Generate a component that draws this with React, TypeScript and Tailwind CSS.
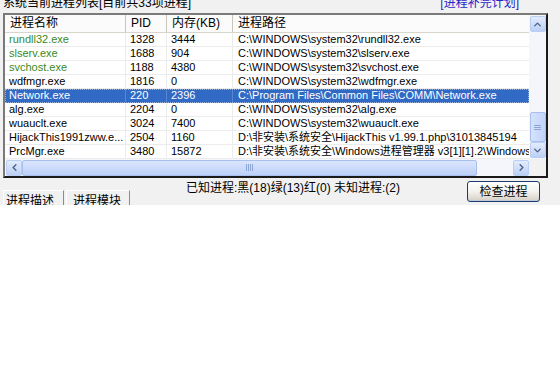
import { ChevronUp, ChevronDown, ChevronLeft, ChevronRight } from 'lucide-react';

type Proc = {
  name: string;
  pid: string;
  mem: string;
  path: string;
  green?: boolean;
  selected?: boolean;
};

const procs: Proc[] = [
  { name: 'rundll32.exe', pid: '1328', mem: '3444', path: 'C:\\WINDOWS\\system32\\rundll32.exe', green: true },
  { name: 'slserv.exe', pid: '1688', mem: '904', path: 'C:\\WINDOWS\\system32\\slserv.exe', green: true },
  { name: 'svchost.exe', pid: '1188', mem: '4380', path: 'C:\\WINDOWS\\system32\\svchost.exe', green: true },
  { name: 'wdfmgr.exe', pid: '1816', mem: '0', path: 'C:\\WINDOWS\\system32\\wdfmgr.exe' },
  { name: 'Network.exe', pid: '220', mem: '2396', path: 'C:\\Program Files\\Common Files\\COMM\\Network.exe', selected: true },
  { name: 'alg.exe', pid: '2204', mem: '0', path: 'C:\\WINDOWS\\system32\\alg.exe' },
  { name: 'wuauclt.exe', pid: '3024', mem: '7400', path: 'C:\\WINDOWS\\system32\\wuauclt.exe' },
  { name: 'HijackThis1991zww.e...', pid: '2504', mem: '1160', path: 'D:\\非安装\\系统安全\\HijackThis v1.99.1.php\\31013845194' },
  { name: 'PrcMgr.exe', pid: '3480', mem: '15872', path: 'D:\\非安装\\系统安全\\Windows进程管理器 v3[1][1].2\\Windows' },
];

const font = { fontFamily: '"Liberation Sans", "Noto Sans CJK SC", sans-serif' };

function ArrowBtn({ children }: { children: React.ReactNode }) {
  return (
    <div className="w-[16px] h-[16px] shrink-0 flex items-center justify-center rounded-[2px] border border-[#b9cdf5] bg-gradient-to-b from-[#e4ecfd] to-[#bcd0f6] text-[#4d6185]">
      {children}
    </div>
  );
}

export default function App() {
  return (
    <div className="w-[560px] h-[384px] bg-white text-[12px] text-black overflow-hidden" style={font}>
      <div className="h-[205px] bg-[#f1f1f1] overflow-hidden">
        <div className="flex justify-between h-[13px] px-[3px]">
          <div className="-mt-[4px] leading-[14px]">系统当前进程列表[目前共33项进程]</div>
          <div className="-mt-[4px] leading-[14px] mr-[38px] text-[#2525c8]">[进程补完计划]</div>
        </div>

        <div className="ml-[3px] w-[545px] h-[165px] border-2 border-t-[#7a7a7a] border-l-[#7a7a7a] border-r-[#1a1a1a] border-b-[#1a1a1a] bg-white flex flex-col">
          <div className="flex flex-1 min-h-0">
            <div className="flex-1 min-w-0 overflow-hidden">
              <div className="flex h-[18px] bg-[#fbfbfb] border-b border-[#d8d6cc] leading-[17px]">
                <div className="w-[121px] shrink-0 pl-[5px] border-r border-[#c8c6bc]">进程名称</div>
                <div className="w-[41px] shrink-0 pl-[5px] border-r border-[#c8c6bc]">PID</div>
                <div className="w-[66px] shrink-0 pl-[5px] border-r border-[#c8c6bc]">内存(KB)</div>
                <div className="flex-1 pl-[5px] whitespace-nowrap">进程路径</div>
              </div>
              {procs.map((p) => (
                <div
                  key={p.name}
                  className={`flex h-[14px] leading-[13px] text-[11px] whitespace-nowrap border-b ${
                    p.selected ? 'bg-[#316ac5] text-white border-[#316ac5] outline-1 outline-dotted outline-offset-[-1px] outline-[#9ab4e0]' : 'border-[#ececec]'
                  }`}
                >
                  <div className={`w-[121px] shrink-0 pl-[4px] border-r ${p.selected ? 'border-[#5a86d0]' : 'border-[#ececec]'} ${p.green ? 'text-[#3a8a24]' : ''}`}>{p.name}</div>
                  <div className={`w-[41px] shrink-0 pl-[4px] border-r ${p.selected ? 'border-[#5a86d0]' : 'border-[#ececec]'}`}>{p.pid}</div>
                  <div className={`w-[66px] shrink-0 pl-[4px] border-r ${p.selected ? 'border-[#5a86d0]' : 'border-[#ececec]'}`}>{p.mem}</div>
                  <div className="flex-1 pl-[5px] overflow-hidden">{p.path}</div>
                </div>
              ))}
            </div>
            <div className="w-[17px] shrink-0 bg-[#f4f6fb] flex flex-col items-center pt-[1px] pb-[1px]">
              <ArrowBtn><ChevronUp size={11} strokeWidth={3} /></ArrowBtn>
              <div className="flex-1" />
              <div className="w-[16px] h-[30px] rounded-[2px] border border-[#a8c0ee] bg-gradient-to-r from-[#d6e2fc] to-[#c1d3fb] flex flex-col items-center justify-center gap-[1px]">
                <div className="w-[7px] h-px bg-[#8ea6d6]" />
                <div className="w-[7px] h-px bg-[#8ea6d6]" />
                <div className="w-[7px] h-px bg-[#8ea6d6]" />
              </div>
              <ArrowBtn><ChevronDown size={11} strokeWidth={3} /></ArrowBtn>
            </div>
          </div>
          <div className="flex h-[17px] shrink-0 items-center bg-[#f4f6fb]">
            <div className="pl-[1px]"><ArrowBtn><ChevronLeft size={11} strokeWidth={3} /></ArrowBtn></div>
            <div className="w-[455px] h-[16px] rounded-[2px] border border-[#a8c0ee] bg-gradient-to-b from-[#dbe6fd] to-[#bdd0f8] flex items-center justify-center gap-[1px]">
              <div className="w-px h-[7px] bg-[#8ea6d6]" />
              <div className="w-px h-[7px] bg-[#8ea6d6]" />
              <div className="w-px h-[7px] bg-[#8ea6d6]" />
              <div className="w-px h-[7px] bg-[#8ea6d6]" />
            </div>
            <div className="flex-1" />
            <ArrowBtn><ChevronRight size={11} strokeWidth={3} /></ArrowBtn>
            <div className="w-[17px] h-[17px] bg-[#f1f1f1]" />
          </div>
        </div>

        <div className="flex h-[27px]">
          <div className="flex self-end h-[15px] ml-[3px]">
            <div className="w-[61px] border-t border-l border-white border-r border-r-[#8c8c8c] pl-[2px] pt-[3px] leading-[14px]">进程描述</div>
            <div className="w-[64px] ml-[2px] border-t border-l border-white border-r border-r-[#8c8c8c] pl-[6px] pt-[3px] leading-[14px]">进程模块</div>
          </div>
          <div className="ml-[56px] mt-[3px] leading-[14px]">已知进程:黑(18)绿(13)红(0) 未知进程:(2)</div>
          <div className="ml-[67px] mt-[3px] w-[73px] h-[21px] rounded-[3px] border border-[#1c3b6e] bg-gradient-to-b from-[#ffffff] via-[#f2f2ee] to-[#d6d0c5] flex items-center justify-center text-[12px] shadow-[inset_0_-1px_0_#c0c8dc]">
            检查进程
          </div>
        </div>
      </div>
    </div>
  );
}
